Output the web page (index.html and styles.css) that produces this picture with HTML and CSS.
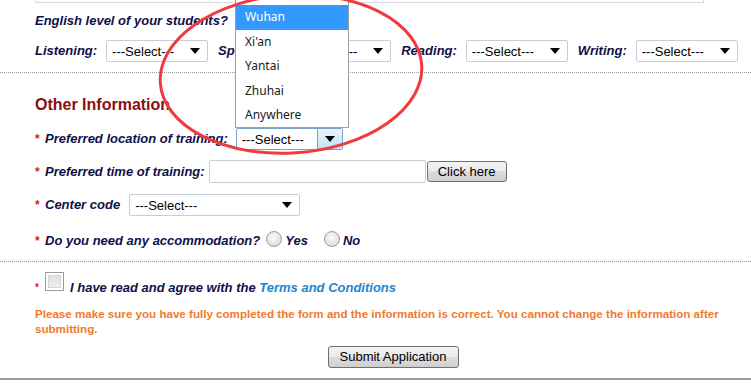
FILE: index.html
```html
<!DOCTYPE html>
<html lang="en">
<head>
<meta charset="utf-8">
<title>Application Form</title>
<link rel="stylesheet" href="styles.css">
</head>
<body>
<div class="page">
  <section class="sec sec-top">
    <div class="stub"></div>
    <p class="q">English level of your students?</p>
    <div class="levels">
      <span class="lbl">Listening:</span>
      <div class="sel w-lvl">---Select---<i class="tri"></i></div>
      <span class="lbl">Speaking:</span>
      <div class="sel w-lvl">---Select---<i class="tri"></i></div>
      <span class="lbl">Reading:</span>
      <div class="sel w-lvl">---Select---<i class="tri"></i></div>
      <span class="lbl">Writing:</span>
      <div class="sel w-lvl">---Select---<i class="tri"></i></div>
    </div>
  </section>

  <section class="sec sec-other">
    <h2 class="title">Other Information</h2>
    <div class="row row-loc">
      <span class="req">*</span><span class="lbl">Preferred location of training:</span>
      <div class="sel sel-focus">---Select---<span class="dd"><i class="tri"></i></span></div>
    </div>
    <div class="row row-time">
      <span class="req">*</span><span class="lbl lbl-tight">Preferred time of training:</span>
      <div class="txt"></div>
      <button class="btn btn-click" type="button">Click here</button>
    </div>
    <div class="row row-code">
      <span class="req">*</span><span class="lbl">Center code</span>
      <div class="sel w-code">---Select---<i class="tri"></i></div>
    </div>
    <div class="row row-acc">
      <span class="req">*</span><span class="lbl lbl-acc">Do you need any accommodation?</span>
      <span class="radio"></span><span class="lbl opt">Yes</span>
      <span class="radio radio-no"></span><span class="lbl opt">No</span>
    </div>
  </section>

  <section class="sec sec-terms">
    <div class="agree">
      <span class="req req-small">*</span>
      <span class="check"></span>
      <span class="lbl agree-text">I have read and agree with the <a class="terms" href="#">Terms and Conditions</a></span>
    </div>
    <p class="note">Please make sure you have fully completed the form and the information is correct. You cannot change the information after submitting.</p>
    <div class="submit-wrap">
      <button class="btn btn-submit" type="button">Submit Application</button>
    </div>
  </section>
  <div class="rule"></div>

  <ul class="dropdown">
    <li class="opt-item">Guangzhou</li>
    <li class="opt-item active">Wuhan</li>
    <li class="opt-item">Xi'an</li>
    <li class="opt-item">Yantai</li>
    <li class="opt-item">Zhuhai</li>
    <li class="opt-item">Anywhere</li>
  </ul>

  <svg class="marker" width="751" height="383" viewBox="0 0 751 383" aria-hidden="true">
    <ellipse cx="291" cy="74" rx="131" ry="79" transform="rotate(-4 291 74)" fill="none" stroke="#ef3b3d" stroke-width="3"/>
  </svg>
</div>
</body>
</html>
```

FILE: styles.css
```css
html, body {
  margin: 0;
  padding: 0;
  background: #fff;
}

body {
  font-family: "Liberation Sans", Arial, sans-serif;
  font-size: 13px;
  color: #000;
}

.page {
  position: relative;
  width: 751px;
  height: 383px;
  overflow: hidden;
}

.sec {
  padding-left: 35px;
}

.sec-other,
.sec-terms {
  border-top: 1px dotted #9a9a9a;
}

/* top section */
.sec-top {
  padding-bottom: 10px;
}

.stub {
  width: 667px;
  height: 2px;
  border: 1px solid #d6dbe1;
  border-top: 0;
}

.q {
  margin: 10px 0 0;
  line-height: 16px;
  font-weight: bold;
  font-style: italic;
  color: #10104a;
}

.lbl {
  font-weight: bold;
  font-style: italic;
  color: #10104a;
  white-space: nowrap;
  line-height: 16px;
}

.levels {
  display: flex;
  align-items: center;
  height: 22px;
  margin-top: 11px;
}

.levels .lbl {
  margin-right: 9px;
}

.levels .sel {
  margin-right: 10px;
}

/* select boxes */
.sel {
  box-sizing: border-box;
  height: 22px;
  display: flex;
  align-items: center;
  justify-content: space-between;
  padding: 0 7px 0 5px;
  border: 1px solid #c9ced4;
  border-radius: 2px;
  background: #fff;
  font-family: "Liberation Sans", Arial, sans-serif;
  font-size: 13px;
  color: #000;
  white-space: nowrap;
}

.w-lvl {
  width: 102px;
}

.w-code {
  width: 171px;
  margin-left: 9px;
}

.tri {
  display: block;
  width: 0;
  height: 0;
  border-left: 5.5px solid transparent;
  border-right: 5.5px solid transparent;
  border-top: 6px solid #000;
}

.sel-focus {
  width: 107px;
  margin-left: 8px;
  padding-right: 0;
  border-color: #7aa3cb;
}

.dd {
  box-sizing: border-box;
  align-self: stretch;
  width: 25px;
  display: flex;
  align-items: center;
  justify-content: center;
  border-left: 1px solid #7aa3cb;
  background: linear-gradient(#eaf6fd, #d6ecfa 50%, #bfe0f6);
}

/* other information */
.title {
  margin: 22px 0 0;
  font-size: 16px;
  line-height: 20px;
  font-weight: bold;
  color: #8b0e0e;
}

.row {
  display: flex;
  align-items: center;
  height: 22px;
}

.req {
  color: #e01818;
  font-size: 12px;
  font-weight: bold;
  width: 10px;
  line-height: 16px;
}

.row-loc {
  margin-top: 13px;
}

.row-time {
  margin-top: 10px;
  height: 23px;
}

.lbl-tight {
  margin-right: 4px;
}

.txt {
  box-sizing: border-box;
  width: 217px;
  height: 23px;
  border: 1px solid #c9ced4;
  border-radius: 2px;
  background: #fff;
}

.btn {
  box-sizing: border-box;
  height: 21px;
  padding: 0 9px;
  border: 1px solid #707070;
  border-radius: 3px;
  background: linear-gradient(#f3f3f3, #ebebeb 50%, #dddddd 50%, #cfcfcf);
  font-family: "Liberation Sans", Arial, sans-serif;
  font-size: 13px;
  color: #000;
  line-height: 19px;
}

.btn-click {
  width: 80px;
  margin-left: 1px;
}

.row-code {
  margin-top: 11px;
}

.row-acc {
  margin-top: 17px;
  height: 16px;
  padding-bottom: 12px;
}

.lbl-acc {
  margin-right: 6px;
}

.radio {
  box-sizing: border-box;
  width: 16px;
  height: 16px;
  margin-top: -5px;
  border: 1px solid #9b9b9b;
  border-radius: 50%;
  background: radial-gradient(circle at 45% 40%, #fbfbfb 0%, #e6e6e6 55%, #cfcfcf 100%);
}

.opt {
  margin-left: 3px;
}

.radio-no {
  margin-left: 16px;
}

/* terms */
.sec-terms {
  padding-bottom: 10px;
}

.agree {
  display: flex;
  align-items: flex-start;
  margin-top: 10px;
}

.req-small {
  font-size: 10px;
  width: 10px;
  margin-top: 11px;
  line-height: 10px;
}

.check {
  box-sizing: border-box;
  width: 19px;
  height: 19px;
  border: 1px solid #9a9a9a;
  background: linear-gradient(#dcdcdc, #f2f2f2);
  box-shadow: inset 0 0 0 2px #fff, inset 0 0 0 3px #d5d5d5;
}

.agree-text {
  margin: 8px 0 0 6px;
  font-size: 13px;
}

.terms {
  color: #1d86cf;
  text-decoration: none;
}

.note {
  width: 705px;
  margin: 10px 0 0;
  font-size: 11.6px;
  line-height: 15px;
  font-weight: bold;
  color: #f07a2e;
}

.submit-wrap {
  margin-top: 10px;
  text-align: center;
}

.btn-submit {
  height: 22px;
  width: 131px;
  padding: 0;
  line-height: 20px;
  vertical-align: top;
}

.rule {
  border-top: 2px solid #9c9c9c;
}

/* open dropdown list */
.dropdown {
  position: absolute;
  left: 235px;
  top: -20px;
  width: 112px;
  margin: 0;
  padding: 0;
  list-style: none;
  border: 1px solid #a0a0a0;
  background: #fff;
  font-family: "Noto Sans", "Open Sans", sans-serif;
  font-size: 12px;
  color: #1a1a1a;
}

.opt-item {
  height: 24.4px;
  line-height: 24px;
  padding-left: 9px;
}

.opt-item.active {
  background: #3399ff;
  color: #fff;
}

.marker {
  position: absolute;
  left: 0;
  top: 0;
  pointer-events: none;
}
```
